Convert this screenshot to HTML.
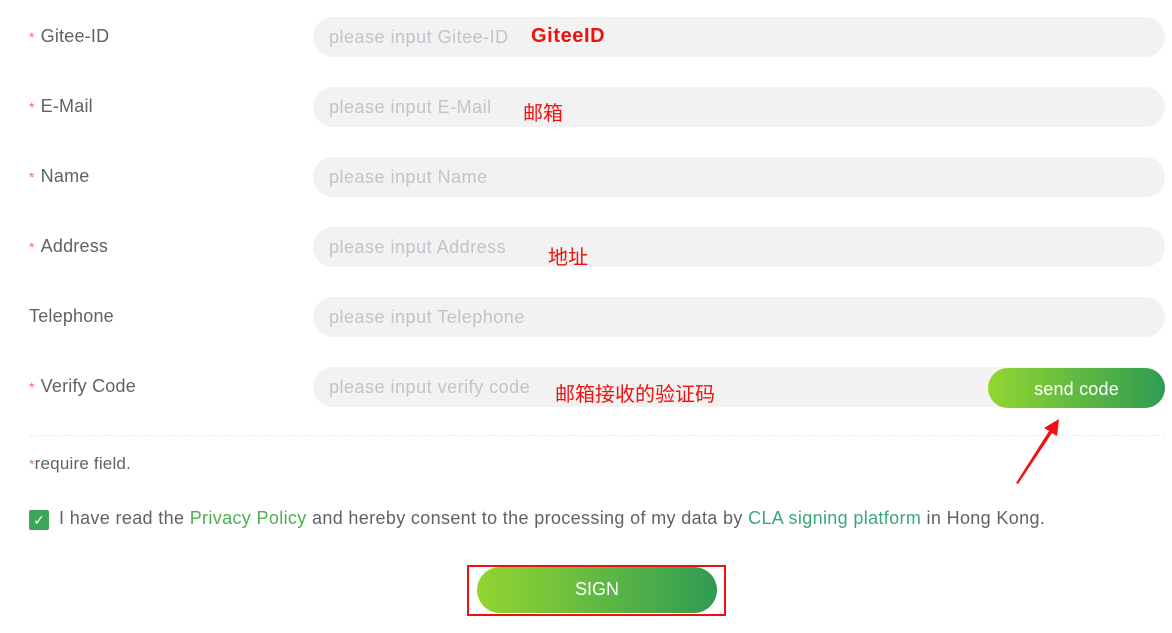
<!DOCTYPE html>
<html><head><meta charset="utf-8"><style>
body{margin:0;width:1172px;height:633px;background:#fff;position:relative;font-family:"Liberation Sans",Arial,sans-serif;overflow:hidden}
.lab{position:absolute;left:29px;font-size:18px;color:#606266;letter-spacing:0.2px}
.lab b{color:#f56c6c;font-weight:normal;font-size:14px;margin-right:6px}
.inp{position:absolute;left:313px;width:852px;height:40px;border-radius:20px;background:#f2f2f2;font-size:18px;color:#c0c4cc;line-height:40px;text-indent:16px;letter-spacing:0.5px}
.ann{position:absolute;color:#f01010;font-size:20px;font-family:"Liberation Sans","Noto Sans CJK SC",sans-serif}
.grad{background:linear-gradient(90deg,#94d630,#2f9c53);color:#fff;text-align:center}
</style></head><body>
<div class="lab" style="top:26px"><b>*</b>Gitee-ID</div><div class="inp" style="top:17px">please input Gitee-ID</div>
<div class="lab" style="top:96px"><b>*</b>E-Mail</div><div class="inp" style="top:87px">please input E-Mail</div>
<div class="lab" style="top:166px"><b>*</b>Name</div><div class="inp" style="top:157px">please input Name</div>
<div class="lab" style="top:236px"><b>*</b>Address</div><div class="inp" style="top:227px">please input Address</div>
<div class="lab" style="top:306px">Telephone</div><div class="inp" style="top:297px">please input Telephone</div>
<div class="lab" style="top:376px"><b>*</b>Verify Code</div><div class="inp" style="top:367px">please input verify code</div>
<div class="grad" style="position:absolute;left:988px;top:368px;width:177px;height:40px;border-radius:20px;line-height:42px;font-size:18px;letter-spacing:0.2px">send code</div>
<div class="ann" style="left:531px;top:25px;font-weight:bold;letter-spacing:0.6px">GiteeID</div>
<div class="ann" style="left:523px;top:97px">邮箱</div>
<div class="ann" style="left:548px;top:241px">地址</div>
<div class="ann" style="left:555px;top:378px">邮箱接收的验证码</div>
<div style="position:absolute;left:29px;top:435px;width:1136px;border-top:1px dashed #eee"></div>
<div style="position:absolute;left:29px;top:454px;font-size:17px;color:#606266;letter-spacing:0.2px"><span style="color:#f56c6c;font-size:14px">*</span>require field.</div>
<div style="position:absolute;left:29px;top:510px;width:20px;height:20px;border-radius:2px;background:#3aa757;color:#fff;font-size:14px;text-align:center;line-height:20px">✓</div>
<div style="position:absolute;left:59px;top:508px;font-size:18px;color:#606266;white-space:nowrap;letter-spacing:0.35px">I have read the <span style="color:#4caf50">Privacy Policy</span> and hereby consent to the processing of my data by <span style="color:#3aa77a">CLA signing platform</span> in Hong Kong.</div>
<svg style="position:absolute;left:0;top:0" width="1172" height="633"><polygon points="1059,419 1057,436 1052,433 1018,484 1016,483 1049,431 1044,428" fill="#f01010"/></svg>
<div style="position:absolute;left:467px;top:565px;width:255px;height:47px;border:2px solid #f01010"></div>
<div class="grad" style="position:absolute;left:477px;top:567px;width:240px;height:46px;border-radius:23px;line-height:44px;font-size:18px">SIGN</div>
</body></html>
